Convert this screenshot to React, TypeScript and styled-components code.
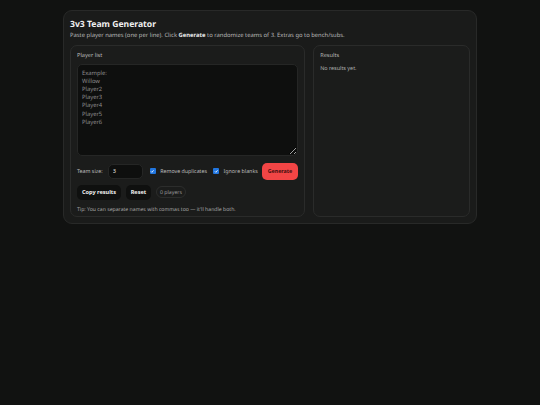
import React, { useState } from "react";
import styled, { createGlobalStyle } from "styled-components";

const Global = createGlobalStyle`
  html, body { margin: 0; padding: 0; background: #111211; }
  body {
    font-family: "Noto Sans", "Open Sans", sans-serif;
    color: #e6e6e6;
    text-rendering: geometricPrecision;
  }
  * { box-sizing: border-box; }
`;

const Page = styled.div`
  min-height: 405px;
  padding: 10px 0;
  background: #111211;
`;

const Card = styled.div`
  width: 414px;
  margin: 0 auto;
  background: #1a1b1a;
  border: 1px solid #282928;
  border-radius: 9px;
  padding: 7px 6px 6px;
`;

const Title = styled.h1`
  margin: 0;
  font-size: 8.6px;
  line-height: 12px;
  font-weight: 700;
  color: #f0f0f0;
`;

const Sub = styled.p`
  margin: 1px 0 5.5px;
  font-size: 5.85px;
  line-height: 8px;
  color: #b8b8b8;
  b { color: #e8e8e8; font-weight: 700; }
`;

const Grid = styled.div`
  display: grid;
  grid-template-columns: minmax(0, 1.5fr) minmax(0, 1fr);
  gap: 8px;
`;

const Panel = styled.section`
  background: #1b1c1b;
  border: 1px solid #2a2b2a;
  border-radius: 7px;
  padding: 5px 6px 3px;
`;

const Label = styled.div`
  font-size: 5.6px;
  line-height: 8px;
  color: #bdbdbd;
  margin-bottom: 5px;
`;

const Area = styled.textarea`
  display: block;
  width: 100%;
  height: 92px;
  background: #0e0f0e;
  border: 1px solid #252625;
  border-radius: 5px;
  color: #ddd;
  font-family: "Noto Sans", "Open Sans", sans-serif;
  text-rendering: geometricPrecision;
  font-size: 5.8px;
  line-height: 8.2px;
  padding: 4px 4px;
  resize: vertical;
  outline: none;
  &::placeholder { color: #8e8e8e; }
`;

const Row = styled.div<{ $mt: number }>`
  display: flex;
  align-items: center;
  margin-top: ${(p) => p.$mt}px;
`;

const Small = styled.span`
  font-size: 5.3px;
  color: #bdbdbd;
  white-space: nowrap;
  margin-right: 5px;
`;

const NumInput = styled.input`
  width: 35px;
  height: 15px;
  background: #0e0f0e;
  border: 1px solid #252625;
  border-radius: 5px;
  color: #e6e6e6;
  font-family: "Noto Sans", sans-serif;
  font-size: 5.6px;
  padding: 0 4px;
  outline: none;
  margin-right: 7px;
  -moz-appearance: textfield;
  &::-webkit-inner-spin-button, &::-webkit-outer-spin-button { -webkit-appearance: none; margin: 0; }
`;

const Check = styled.label<{ $mr: number }>`
  display: flex;
  align-items: center;
  gap: 4.5px;
  margin-right: ${(p) => p.$mr}px;
  font-size: 5.3px;
  color: #bdbdbd;
  white-space: nowrap;
`;

const Box = styled.span`
  width: 6px;
  height: 6px;
  border-radius: 1px;
  background: #2176e0;
  display: inline-flex;
  align-items: center;
  justify-content: center;
`;

const PrimaryBtn = styled.button`
  height: 17px;
  width: 37px;
  padding: 0;
  border-radius: 5px;
  border: none;
  background: #f24545;
  color: #3f0f0f;
  font-family: "Noto Sans", sans-serif;
  font-size: 5.3px;
  font-weight: 700;
  white-space: nowrap;
  cursor: pointer;
`;

const Btn = styled.button<{ $w: number }>`
  height: 15px;
  width: ${(p) => p.$w}px;
  padding: 0;
  margin-right: 5px;
  border-radius: 5px;
  border: none;
  background: #0f100f;
  color: #f2f2f2;
  font-family: "Noto Sans", sans-serif;
  font-size: 5.6px;
  font-weight: 700;
  white-space: nowrap;
  cursor: pointer;
`;

const Pill = styled.span`
  height: 12px;
  width: 30px;
  justify-content: center;
  border: 1px solid #2c2d2c;
  border-radius: 6px;
  font-size: 5.2px;
  color: #9a9a9a;
  display: inline-flex;
  align-items: center;
`;

const Tip = styled.div`
  margin-top: 5px;
  font-size: 5.15px;
  line-height: 8px;
  color: #a8a8a8;
`;

const Empty = styled.div`
  font-size: 5.4px;
  line-height: 8px;
  color: #b0b0b0;
  margin-top: 5px;
`;

const Tick = () => (
  <svg width="4.5" height="4.5" viewBox="0 0 10 10">
    <path d="M2 5.2 L4.2 7.4 L8 2.8" stroke="#fff" strokeWidth="1.8" fill="none" />
  </svg>
);

export default function App() {
  const [text, setText] = useState("");
  return (
    <Page>
      <Global />
      <Card>
        <Title>3v3 Team Generator</Title>
        <Sub>
          Paste player names (one per line). Click <b>Generate</b> to randomize teams of 3. Extras go to bench/subs.
        </Sub>
        <Grid>
          <Panel>
            <Label>Player list</Label>
            <Area
              value={text}
              onChange={(e) => setText(e.target.value)}
              placeholder={"Example:\nWillow\nPlayer2\nPlayer3\nPlayer4\nPlayer5\nPlayer6"}
            />
            <Row $mt={7}>
              <Small>Team size:</Small>
              <NumInput type="number" defaultValue={3} />
              <Check $mr={6}>
                <Box><Tick /></Box>Remove duplicates
              </Check>
              <Check $mr={4}>
                <Box><Tick /></Box>Ignore blanks
              </Check>
              <PrimaryBtn>Generate</PrimaryBtn>
            </Row>
            <Row $mt={5}>
              <Btn $w={44}>Copy results</Btn>
              <Btn $w={25}>Reset</Btn>
              <Pill>0 players</Pill>
            </Row>
            <Tip>Tip: You can separate names with commas too — it'll handle both.</Tip>
          </Panel>
          <Panel>
            <Label>Results</Label>
            <Empty>No results yet.</Empty>
          </Panel>
        </Grid>
      </Card>
    </Page>
  );
}
